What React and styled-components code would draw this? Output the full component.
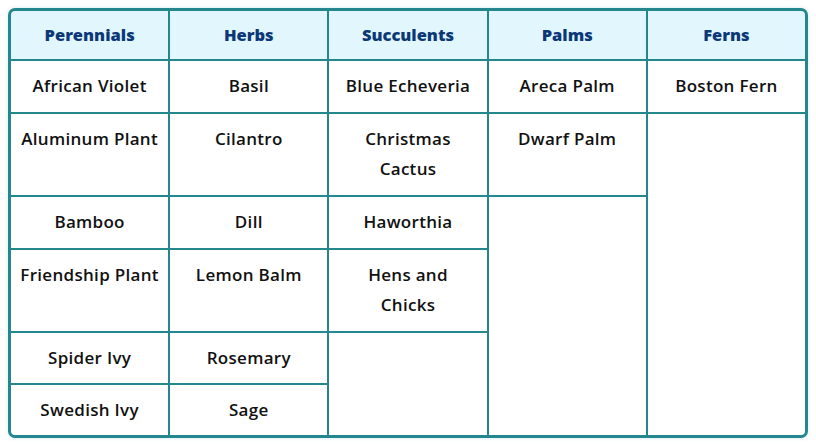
import React from "react";
import styled, { createGlobalStyle } from "styled-components";

const Global = createGlobalStyle`
  html, body { margin: 0; padding: 0; background: #ffffff; }
  body { font-family: "Open Sans", "Noto Sans", sans-serif; }
`;

const Page = styled.div`
  padding: 8px 8px 6px 8px;
`;

const Grid = styled.div`
  width: 794px;
  display: grid;
  grid-template-columns: repeat(5, 1fr);
  grid-template-rows: 48px 51px 81px 51px 81px 50px 50px;
  gap: 2px;
  background: #23878d;
  border: 3px solid #23878d;
  border-radius: 7px;
  overflow: hidden;
  box-shadow: 0 0 4px rgba(35, 135, 141, 0.18);
`;

const Head = styled.div`
  background: #e1f6fd;
  color: #0c3877;
  font-weight: 800;
  font-size: 16.5px;
  display: flex;
  align-items: center;
  justify-content: center;
  padding-bottom: 2px;
`;

const Cell = styled.div`
  background: #ffffff;
  color: #111111;
  font-weight: 600;
  font-size: 17px;
  letter-spacing: 0.3px;
  line-height: 30px;
  text-align: center;
  padding: 10px 6px 0;
  grid-column: ${(p) => p.$col};
  grid-row: ${(p) => p.$row} / span ${(p) => p.$span || 1};
`;

const headers = ["Perennials", "Herbs", "Succulents", "Palms", "Ferns"];

const columns = [
  ["African Violet", "Aluminum Plant", "Bamboo", "Friendship Plant", "Spider Ivy", "Swedish Ivy"],
  ["Basil", "Cilantro", "Dill", "Lemon Balm", "Rosemary", "Sage"],
  ["Blue Echeveria", ["Christmas", "Cactus"], "Haworthia", ["Hens and", "Chicks"]],
  ["Areca Palm", "Dwarf Palm"],
  ["Boston Fern"],
];

export default function App() {
  const cells = [];
  columns.forEach((items, ci) => {
    items.forEach((it, ri) => {
      cells.push(
        <Cell key={`${ci}-${ri}`} $col={ci + 1} $row={ri + 2}>
          {Array.isArray(it) ? (
            <>
              {it[0]}
              <br />
              {it[1]}
            </>
          ) : (
            it
          )}
        </Cell>
      );
    });
    if (items.length < 6) {
      cells.push(
        <Cell key={`${ci}-empty`} $col={ci + 1} $row={items.length + 2} $span={6 - items.length} />
      );
    }
  });
  return (
    <>
      <Global />
      <Page>
        <Grid>
          {headers.map((h) => (
            <Head key={h}>{h}</Head>
          ))}
          {cells}
        </Grid>
      </Page>
    </>
  );
}
